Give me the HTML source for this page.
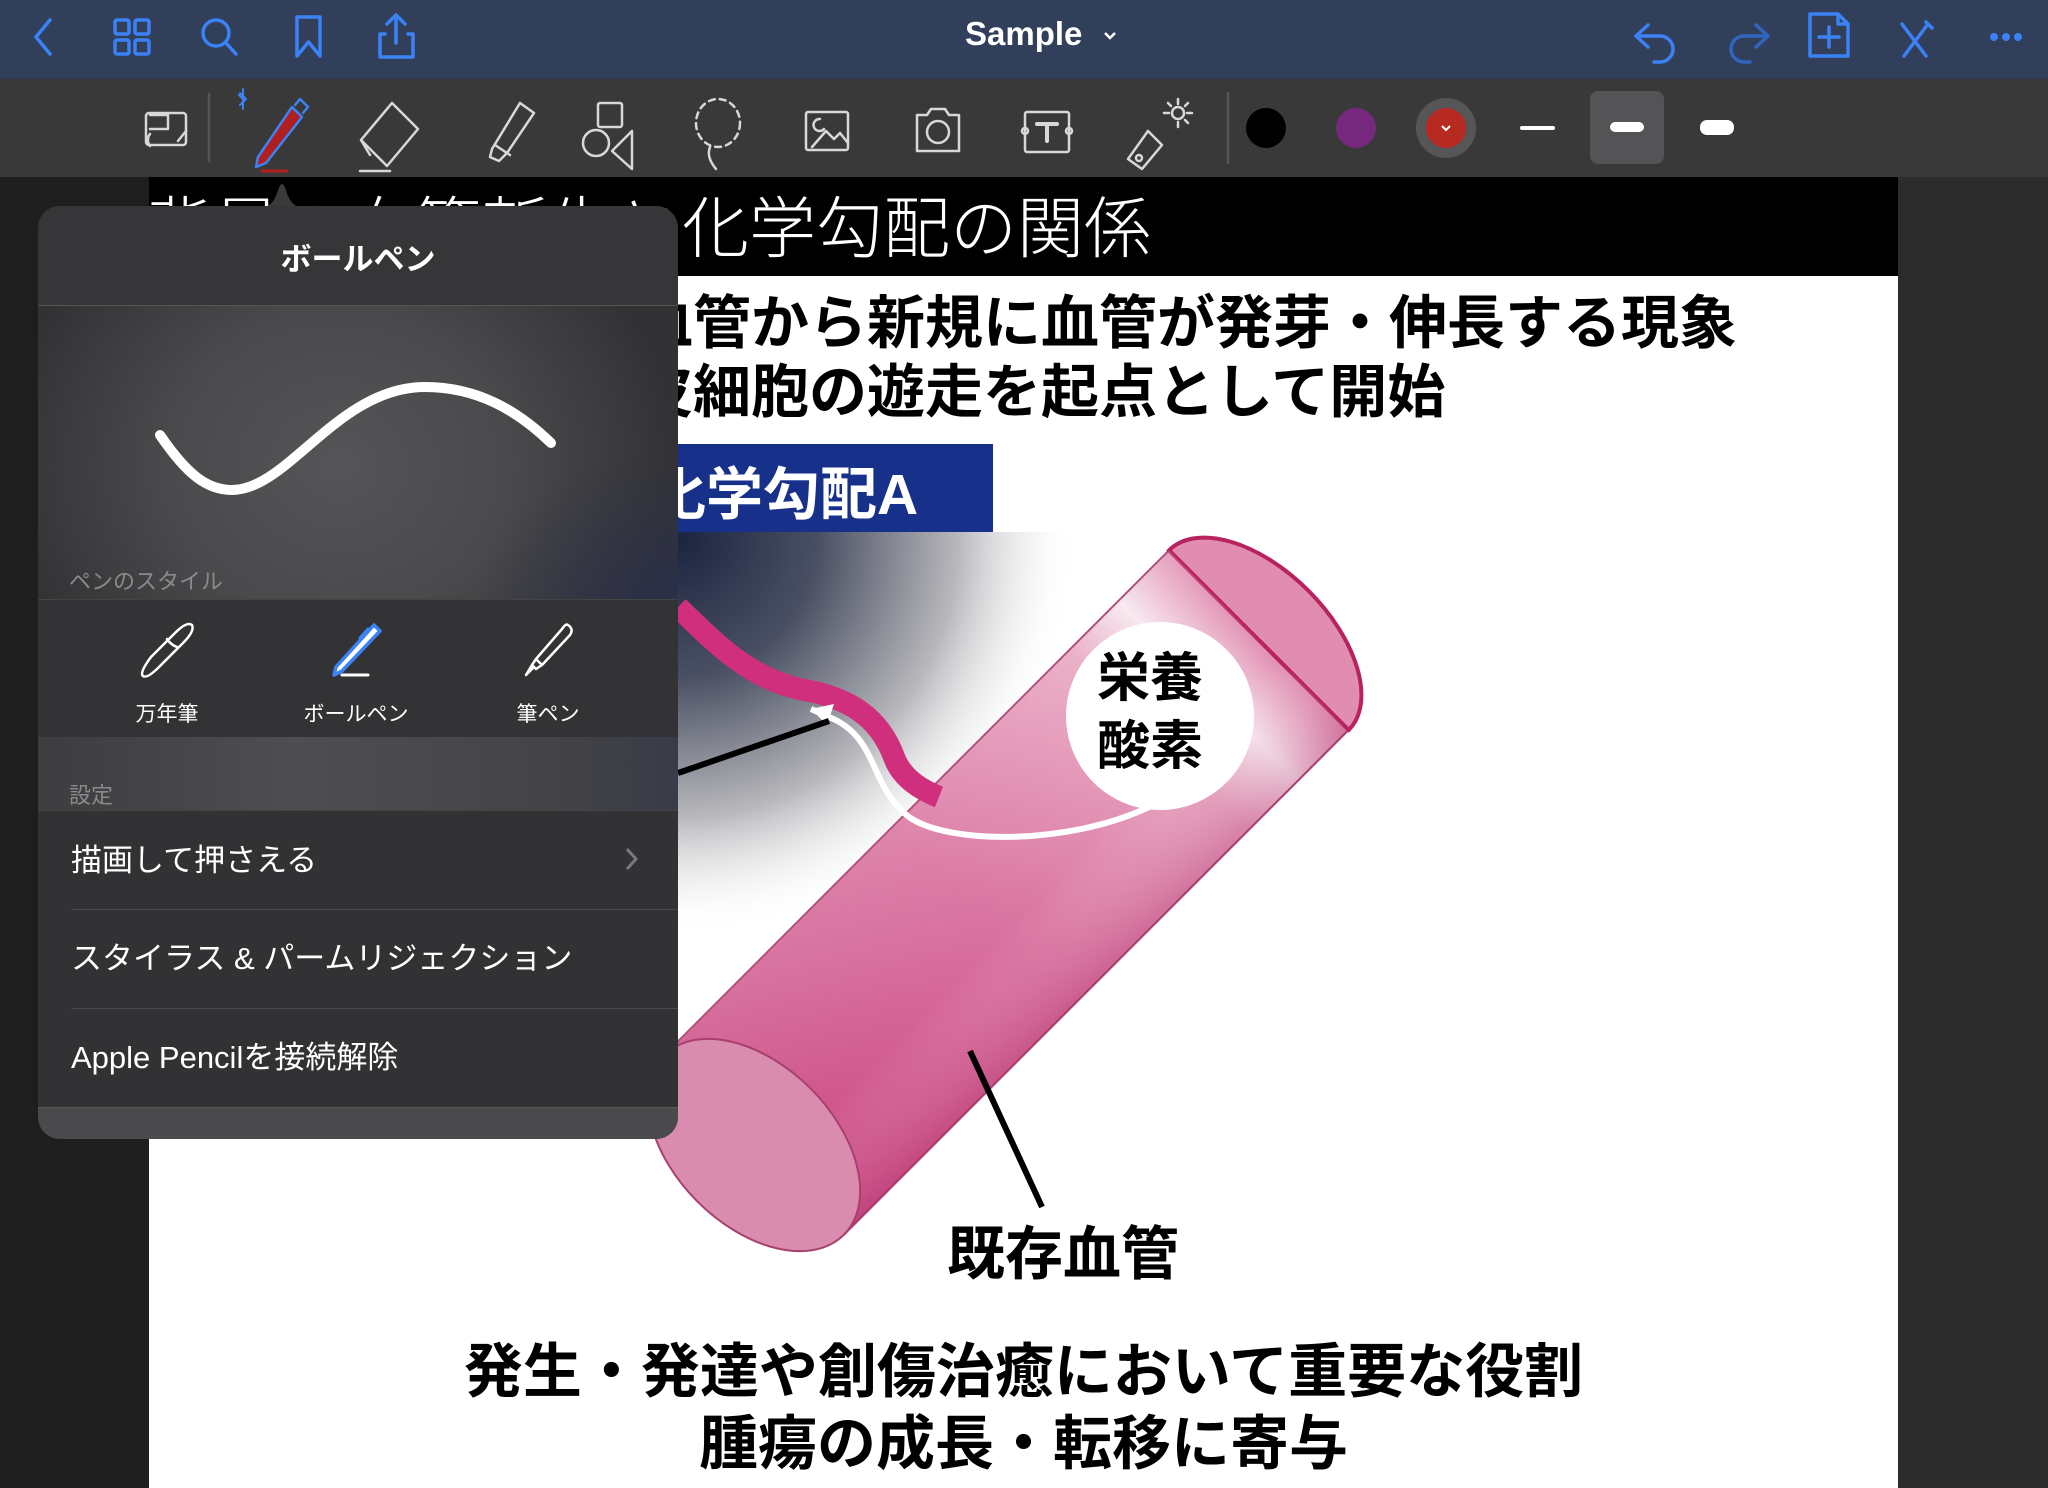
<!DOCTYPE html>
<html><head><meta charset="utf-8">
<style>
*{margin:0;padding:0;box-sizing:border-box}
body{width:2048px;height:1488px;overflow:hidden;background:#232323;font-family:"Liberation Sans","Noto Sans CJK JP",sans-serif;position:relative}
.abs{position:absolute}
#nav{left:0;top:0;width:2048px;height:79px;background:#323f5a}
#tool{left:0;top:79px;width:2048px;height:98px;background:#393939}
#leftbg{left:0;top:177px;width:149px;height:1311px;background:#1e1e1e}
#rightbg{left:1898px;top:177px;width:150px;height:1311px;background:#2b2b2b}
#page{left:149px;top:177px;width:1749px;height:1311px;background:#fff;overflow:hidden}
.jp{font-family:"Liberation Sans","Noto Sans CJK JP",sans-serif}
.b{font-weight:bold;color:#000;white-space:nowrap}
#pop{left:38px;top:206px;width:640px;height:933px;border-radius:22px;overflow:hidden;background:#3a3a3c}
.row{position:absolute;left:0;width:640px;background:#323234;color:#fff;font-size:31px;padding-left:33px;white-space:nowrap}
.sep{position:absolute;left:33px;right:0;height:1px;background:#4a4a4d}
.lbl{position:absolute;top:492px;width:200px;text-align:center;color:#fff;font-size:21px}
</style></head><body>
<div id="nav" class="abs">
<svg class="abs" style="left:0;top:0" width="2048" height="79" fill="none" stroke="#3a82f6" stroke-width="3.5" stroke-linecap="round" stroke-linejoin="round">
<path d="M50 20 L36 37 L50 54"/>
<rect x="115" y="20" width="14" height="14" rx="2"/><rect x="135" y="20" width="14" height="14" rx="2"/><rect x="115" y="40" width="14" height="14" rx="2"/><rect x="135" y="40" width="14" height="14" rx="2"/>
<circle cx="216" cy="33" r="13"/><path d="M226 43 L236 54"/>
<path d="M297 17 H320 V56 L308.5 42 L297 56 Z"/>
<path d="M385 34 H380 V57 H413 V34 H408 M396 43 V15 M387 24 L396 15 L405 24"/>
<path d="M1648 25 L1636 36 L1648 47 M1637 36 H1660 A13 13 0 0 1 1660 62 H1654"/>
<path d="M1756 25 L1768 36 L1756 47 M1767 36 H1744 A13 13 0 0 0 1744 62 H1750" stroke="#2f66c0"/>
<path d="M1810 14 H1838 L1848 24 V56 H1810 Z M1838 14 V24 H1848 M1829 27 V47 M1819 37 H1839"/>
<path d="M1902 24 L1926 56 M1928 24 L1904 56 M1926 22 L1932 28"/>
</svg>
<div class="abs" style="left:1950px;top:0;width:80px;height:79px">
<span class="abs" style="left:40px;top:33px;width:8px;height:8px;border-radius:50%;background:#3a82f6"></span>
<span class="abs" style="left:52px;top:33px;width:8px;height:8px;border-radius:50%;background:#3a82f6"></span>
<span class="abs" style="left:64px;top:33px;width:8px;height:8px;border-radius:50%;background:#3a82f6"></span>
</div>
<div class="abs" style="left:965px;top:15px;color:#fff;font-size:33px;font-weight:bold">Sample</div>
<svg class="abs" style="left:1102px;top:28px" width="16" height="16" fill="none" stroke="#fff" stroke-width="2.5"><path d="M3 5 L8 10 L13 5"/></svg>
</div>

<div id="tool" class="abs">
<svg class="abs" style="left:0;top:0" width="2048" height="98" fill="none" stroke="#d8d8d8" stroke-width="2.5" stroke-linecap="round" stroke-linejoin="round">
<rect x="146" y="34" width="40" height="32" rx="3"/><path d="M150 36 h18 v14 h-18 M150 55 a6 8 0 0 0 0 12 M178 62 l8 -10"/>
<path d="M209 15 V82" stroke="#555"/>
<path d="M240 14 l6 6 l-6 6 M243 10 v20 M243 20 l-4 -4" stroke="#3a82f6" stroke-width="2"/>
<path d="M292 28 L302 38 L266 84 L256 88 L258 78 Z" fill="#b01e1e" stroke="#3a82f6"/><path d="M295 26 L300 20 L308 28 L303 34" stroke="#3a82f6"/><path d="M262 92 H287" stroke="#b01e1e" stroke-width="3"/>
<path d="M392 24 L418 50 L387 87 L361 61 Z M361 61 L370 76 M360 92 H390"/>
<path d="M520 24 L534 34 L507 74 L499 82 L490 78 L492 70 Z M495 66 L510 76"/>
<rect x="598" y="24" width="24" height="24" rx="2"/><circle cx="596" cy="64" r="13"/><path d="M632 52 V90 L612 72 Z"/>
<ellipse cx="718" cy="44" rx="22" ry="24" stroke-dasharray="6 5"/><path d="M710 68 q-4 10 6 22"/>
<rect x="806" y="33" width="42" height="38" rx="2"/><path d="M812 68 L826 52 L834 60 L840 54 L848 64 M820 40 a6 6 0 1 0 4 10"/>
<path d="M917 36 h10 l4 -6 h14 l4 6 h10 v36 h-42 Z"/><circle cx="938" cy="53" r="11"/>
<rect x="1025" y="33" width="44" height="40" rx="2"/><path d="M1037 45 H1057 M1047 45 V62" stroke-width="4"/><circle cx="1025" cy="52" r="3"/><circle cx="1069" cy="52" r="3"/>
<path d="M1148 52 L1162 66 L1142 90 L1128 80 Z"/><circle cx="1139" cy="79" r="3"/><circle cx="1178" cy="34" r="6"/><path d="M1178 20 v5 M1178 43 v5 M1164 34 h5 M1187 34 h5 M1168 24 l3 3 M1185 41 l3 3 M1188 24 l-3 3"/>
<path d="M1228 14 V84" stroke="#555"/>
</svg>
<div class="abs" style="left:1246px;top:29px;width:40px;height:40px;border-radius:50%;background:#000"></div>
<div class="abs" style="left:1336px;top:29px;width:40px;height:40px;border-radius:50%;background:#77297f"></div>
<div class="abs" style="left:1416px;top:19px;width:60px;height:60px;border-radius:50%;background:#565658"></div>
<div class="abs" style="left:1426px;top:29px;width:40px;height:40px;border-radius:50%;background:#b72a22"></div>
<svg class="abs" style="left:1440px;top:43px" width="12" height="12" fill="none" stroke="#fff" stroke-width="2"><path d="M2 4 L6 8 L10 4"/></svg>
<div class="abs" style="left:1520px;top:47px;width:35px;height:4px;background:#fff;border-radius:2px"></div>
<div class="abs" style="left:1590px;top:12px;width:74px;height:73px;border-radius:8px;background:#545457"></div>
<div class="abs" style="left:1610px;top:43px;width:34px;height:10px;background:#fff;border-radius:5px"></div>
<div class="abs" style="left:1700px;top:41px;width:34px;height:15px;background:#fff;border-radius:7px"></div>
</div>

<div id="leftbg" class="abs"></div>
<div id="rightbg" class="abs"></div>

<div id="page" class="abs">
<div class="abs" style="left:0;top:0;width:1749px;height:99px;background:#000"></div>
<div class="abs jp" style="left:-3px;top:-2px;color:#fff;font-size:67px;white-space:nowrap;font-weight:300">背景：血管新生と化学勾配の関係</div>
<div class="abs jp b" style="left:486px;top:99px;font-size:58px">血管から新規に血管が発芽・伸長する現象</div>
<div class="abs jp b" style="left:486px;top:168px;font-size:58px">皮細胞の遊走を起点として開始</div>
<svg class="abs" style="left:0;top:0" width="1749" height="1311">
<defs>
<radialGradient id="dk" cx="529" cy="360" r="400" gradientUnits="userSpaceOnUse">
<stop offset="0" stop-color="#1b2440"/><stop offset="0.35" stop-color="#4a5063"/><stop offset="0.7" stop-color="#b8b8bc"/><stop offset="1" stop-color="#fff" stop-opacity="0"/></radialGradient>
<linearGradient id="pk" x1="0" y1="0" x2="714" y2="0" gradientUnits="userSpaceOnUse">
<stop offset="0" stop-color="#cc4d86"/><stop offset="0.45" stop-color="#d9709e"/><stop offset="0.8" stop-color="#e7a3bf"/><stop offset="0.9" stop-color="#f7e6ee"/><stop offset="1" stop-color="#e08db0"/></linearGradient>
<linearGradient id="sh" x1="0" y1="-127" x2="0" y2="127" gradientUnits="userSpaceOnUse">
<stop offset="0" stop-color="#fff" stop-opacity="0.15"/><stop offset="0.6" stop-color="#fff" stop-opacity="0"/><stop offset="1" stop-color="#a01a5a" stop-opacity="0.25"/></linearGradient>
</defs>
<rect x="340" y="355" width="700" height="540" fill="url(#dk)"/>
<g transform="translate(605,968) rotate(-45)">
<rect x="0" y="-127" width="714" height="254" fill="url(#pk)" stroke="#a8406c" stroke-width="2"/>
<path d="M714 -127 A70 127 0 0 1 714 127 Z" fill="#e08db0" stroke="#b8225f" stroke-width="4"/>
<rect x="0" y="-127" width="714" height="254" fill="url(#sh)"/>
<ellipse cx="0" cy="0" rx="80" ry="127" fill="#d98cae" stroke="#a8406c" stroke-width="2"/>
</g>
<path d="M529 430 C570 470, 600 500, 650 512 C700 520, 730 540, 745 580 C752 600, 770 612, 790 620" fill="none" stroke="#cf2f7c" stroke-width="22" stroke-linecap="butt"/>
<path d="M1000 630 C920 668, 800 668, 760 640 C720 610, 730 560, 680 540 L662 532" fill="none" stroke="#fff" stroke-width="6"/>
<path d="M662 532 L685 527 L678 548 Z" fill="#fff"/>
<path d="M529 596 L680 544" stroke="#000" stroke-width="6"/>
<circle cx="1011" cy="539" r="94" fill="#fff"/>
<path d="M821 874 L893 1030" stroke="#000" stroke-width="6"/>
</svg>
<div class="abs" style="left:529px;top:267px;width:315px;height:88px;background:#17308a"></div>
<div class="abs jp" style="left:500px;top:272px;color:#fff;font-size:57px;font-weight:bold;white-space:nowrap">化学勾配A</div>
<div class="abs jp b" style="left:948px;top:468px;font-size:53px;line-height:68px">栄養<br>酸素</div>
<div class="abs jp b" style="left:798px;top:1030px;font-size:58px">既存血管</div>
<div class="abs jp b" style="left:0;width:1749px;text-align:center;top:1147px;font-size:59px">発生・発達や創傷治癒において重要な役割</div>
<div class="abs jp b" style="left:0;width:1749px;text-align:center;top:1219px;font-size:59px">腫瘍の成長・転移に寄与</div>
</div>

<svg class="abs" style="left:262px;top:178px" width="40" height="30"><path d="M0 30 Q12 28 16 12 Q20 0 24 12 Q28 28 40 30 Z" fill="#3a3a3c"/></svg>
<div id="pop" class="abs">
<div class="abs" style="left:0;top:0;width:640px;height:100px;background:#363638"></div>
<div class="abs jp" style="left:0;width:640px;text-align:center;top:28px;color:#fff;font-size:31px;font-weight:bold">ボールペン</div>
<div class="abs" style="left:0;top:99px;width:640px;height:1px;background:#555"></div>
<div class="abs" style="left:0;top:100px;width:640px;height:293px;background:radial-gradient(ellipse 340px 300px at 300px 160px,#555557 0%,#4a4a4c 50%,#323234 100%)"></div>
<div class="abs" style="left:440px;top:240px;width:200px;height:160px;background:radial-gradient(ellipse at 100% 100%,#2b3049 0%,rgba(43,48,73,0) 70%)"></div>
<svg class="abs" style="left:0;top:0" width="640" height="400"><path d="M122 229 C150 270, 170 284, 194 284 C250 284, 300 181, 387 181 C440 181, 480 205, 513 237" fill="none" stroke="#fff" stroke-width="10" stroke-linecap="round"/></svg>
<div class="abs jp" style="left:31px;top:358px;color:#8a8a8c;font-size:22px">ペンのスタイル</div>
<div class="abs" style="left:0;top:393px;width:640px;height:138px;background:#333335;border-top:1px solid #444"></div>
<svg class="abs" style="left:0;top:393px" width="640" height="138" fill="none" stroke="#fff" stroke-width="2.5" stroke-linecap="round" stroke-linejoin="round">
<g transform="translate(129,50)">
<path d="M-24 27 Q-28 24 -16 8 L8 -16 Q20 -28 25 -24 Q28 -18 16 -6 L-8 18 Q-20 30 -24 27 Z M0 -10 Q4 -4 10 -2"/>
</g>
<g transform="translate(318,50)">
<path d="M18 -24 L24 -18 L-14 22 L-22 26 L-20 18 Z" fill="#fff" stroke="#3a82f6" stroke-width="3.5"/>
<path d="M12 -20 L4 -11" stroke="#3a82f6" stroke-width="3"/>
<path d="M-14 26 H12" stroke-width="3"/>
</g>
<g transform="translate(510,50)">
<path d="M20 -24 Q26 -20 22 -14 L-6 16 L-12 10 L14 -20 Q18 -26 20 -24 Z M-6 16 L-12 20 L-16 16 L-12 10 M-14 18 L-22 26 L-16 16"/>
</g>
</svg>
<div class="lbl jp" style="left:29px">万年筆</div>
<div class="lbl jp" style="left:218px">ボールペン</div>
<div class="lbl jp" style="left:410px">筆ペン</div>
<div class="abs" style="left:0;top:531px;width:640px;height:73px;background:linear-gradient(90deg,#3d3d3f,#4e4e50 40%,#444446 80%,#393b48)"></div>
<div class="abs jp" style="left:31px;top:572px;color:#8a8a8c;font-size:22px">設定</div>
<div class="row" style="top:604px;height:99px;line-height:99px;border-top:1px solid #444">描画して押さえる</div>
<svg class="abs" style="left:586px;top:640px" width="16" height="26" fill="none" stroke="#7a7a7c" stroke-width="3"><path d="M3 3 L12 13 L3 23"/></svg>
<div class="row" style="top:703px;height:99px;line-height:99px">スタイラス &amp; パームリジェクション</div>
<div class="sep" style="top:703px"></div>
<div class="row" style="top:802px;height:99px;line-height:99px">Apple Pencilを接続解除</div>
<div class="sep" style="top:802px"></div>
<div class="abs" style="left:0;top:901px;width:640px;height:32px;background:#4a4a4c;border-top:1px solid #555"></div>
</div>
</body></html>
